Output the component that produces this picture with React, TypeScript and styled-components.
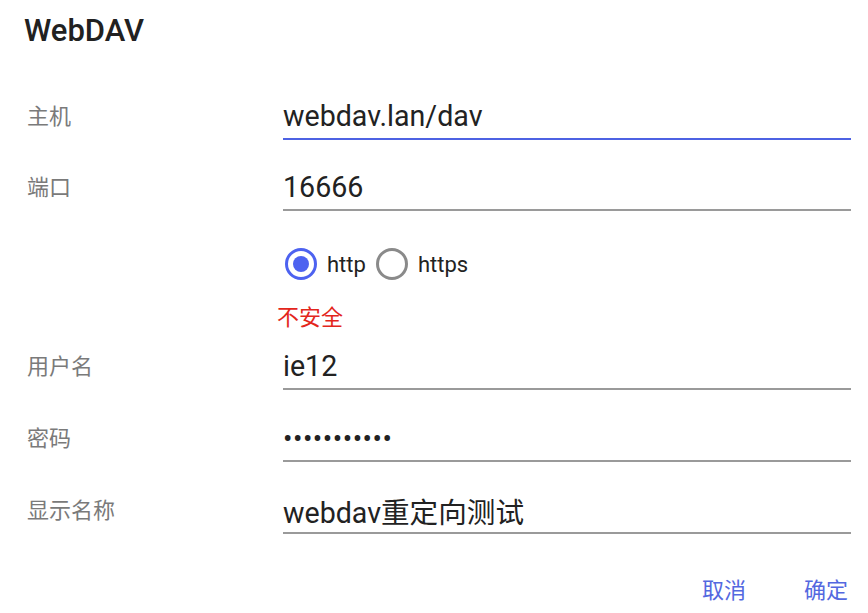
import styled, { createGlobalStyle } from "styled-components";

const GlobalStyle = createGlobalStyle`
  html, body {
    margin: 0;
    padding: 0;
    background: #ffffff;
  }
  body {
    font-family: Roboto, "Noto Sans CJK SC", "Noto Sans", sans-serif;
    color: #212121;
  }
`;

const Dialog = styled.div`
  width: 868px;
  height: 613px;
  box-sizing: border-box;
  padding: 12px 17px 0 24px;
  display: flex;
  flex-direction: column;
  background: #fff;
`;

const Title = styled.h1`
  margin: 0;
  font-size: 31px;
  line-height: 37px;
  font-weight: 500;
  color: #212121;
`;

const Form = styled.div`
  display: flex;
  flex-direction: column;
  padding-left: 3px;
`;

const Row = styled.div<{ $top: number }>`
  display: grid;
  grid-template-columns: 256px 1fr;
  align-items: center;
  margin-top: ${p => p.$top}px;
`;

const Label = styled.span`
  font-size: 22px;
  line-height: 30px;
  color: #7a7a7a;
`;

const Field = styled.div<{ $focused?: boolean }>`
  height: 44px;
  display: flex;
  align-items: center;
  font-size: 28.6px;
  color: #222;
  border-bottom: 2px solid ${p => (p.$focused ? "#4d62e3" : "#9a9a9a")};
`;

const Dots = styled.span`
  font-size: 28px;
  letter-spacing: 0.5px;
`;

const RadioGroup = styled.div`
  display: flex;
  align-items: center;
  height: 48px;
  padding-left: 2px;
`;

const RadioOption = styled.label`
  display: flex;
  align-items: center;
  gap: 10px;
  margin-right: 10px;
  font-size: 22px;
  color: #222;
`;

const RadioCircle = styled.span<{ $checked?: boolean }>`
  width: 32px;
  height: 32px;
  box-sizing: border-box;
  border-radius: 50%;
  border: 3px solid ${p => (p.$checked ? "#4d62f0" : "#8a8a8a")};
  display: flex;
  align-items: center;
  justify-content: center;

  &::after {
    content: "";
    width: 16px;
    height: 16px;
    border-radius: 50%;
    background: ${p => (p.$checked ? "#4d62f0" : "transparent")};
  }
`;

const Warning = styled.span`
  font-size: 22px;
  line-height: 30px;
  color: #e3261c;
  margin-left: -6px;
`;

const Actions = styled.div`
  display: flex;
  justify-content: flex-end;
  align-items: center;
  gap: 58px;
  height: 40px;
  margin-top: 37px;
  padding-right: 3px;
`;

const TextButton = styled.button`
  border: none;
  background: none;
  padding: 0;
  font-family: inherit;
  font-size: 22px;
  line-height: 30px;
  color: #5468e0;
  cursor: pointer;
`;

export default function App() {
  return (
    <>
      <GlobalStyle />
      <Dialog>
        <Title>WebDAV</Title>
        <Form>
          <Row $top={45}>
            <Label>主机</Label>
            <Field $focused>webdav.lan/dav</Field>
          </Row>
          <Row $top={25}>
            <Label>端口</Label>
            <Field>16666</Field>
          </Row>
          <Row $top={29}>
            <span />
            <RadioGroup>
              <RadioOption>
                <RadioCircle $checked />
                http
              </RadioOption>
              <RadioOption>
                <RadioCircle />
                https
              </RadioOption>
            </RadioGroup>
          </Row>
          <Row $top={15}>
            <span />
            <Warning>不安全</Warning>
          </Row>
          <Row $top={11}>
            <Label>用户名</Label>
            <Field>ie12</Field>
          </Row>
          <Row $top={26}>
            <Label>密码</Label>
            <Field>
              <Dots>•••••••••••</Dots>
            </Field>
          </Row>
          <Row $top={26}>
            <Label>显示名称</Label>
            <Field>webdav重定向测试</Field>
          </Row>
        </Form>
        <Actions>
          <TextButton>取消</TextButton>
          <TextButton>确定</TextButton>
        </Actions>
      </Dialog>
    </>
  );
}
